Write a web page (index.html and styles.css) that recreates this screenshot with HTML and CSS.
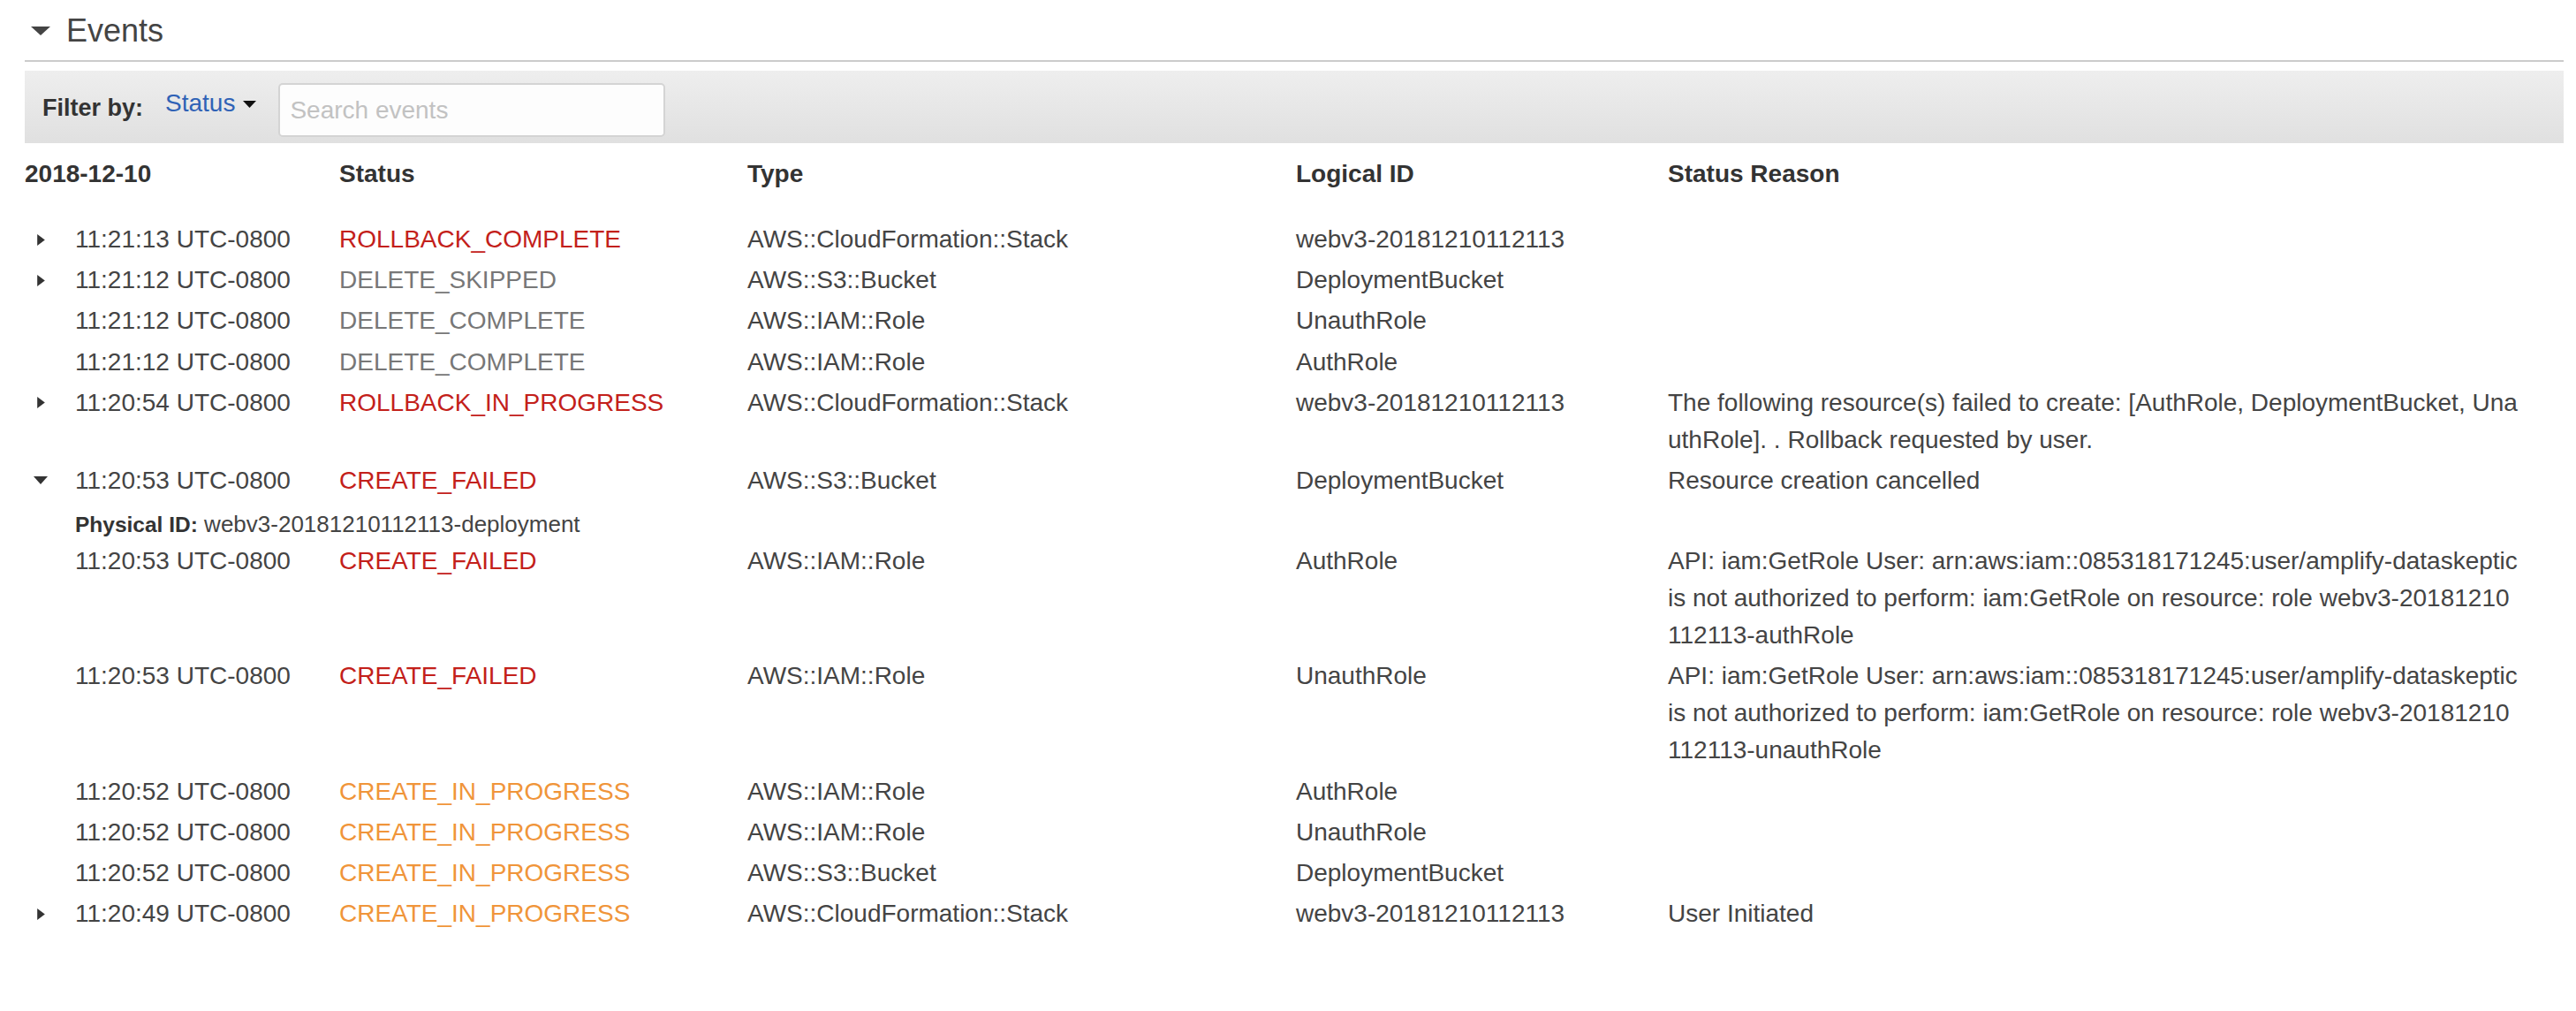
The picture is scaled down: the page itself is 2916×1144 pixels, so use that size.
FILE: index.html
```html
<!DOCTYPE html>
<html lang="en">
<head>
<meta charset="utf-8">
<title>Events</title>
<link rel="stylesheet" href="styles.css">
</head>
<body>
<div class="page">
  <div class="section-head">
    <svg class="section-caret" viewBox="0 0 22 10"><polygon points="0,0 22,0 11,10" fill="#444"/></svg>
    <span class="section-title">Events</span>
  </div>
  <div class="divider"></div>
  <div class="filter-bar">
    <span class="filter-label">Filter by:</span>
    <span class="filter-status">Status</span>
    <svg class="filter-caret" viewBox="0 0 15 8"><polygon points="0,0 15,0 7.5,8" fill="#111"/></svg>
    <input class="search" type="text" placeholder="Search events">
  </div>

  <div class="grid head-row">
    <div class="cell">2018-12-10</div>
    <div class="cell">Status</div>
    <div class="cell">Type</div>
    <div class="cell">Logical ID</div>
    <div class="cell">Status Reason</div>
  </div>

  <div class="events">
    <div class="grid row">
      <div class="cell time"><span class="toggle"><svg class="tri-right" viewBox="0 0 8 12"><polygon points="0,0 8,6 0,12" fill="#333"/></svg></span>11:21:13 UTC-0800</div>
      <div class="cell st-red">ROLLBACK_COMPLETE</div>
      <div class="cell">AWS::CloudFormation::Stack</div>
      <div class="cell">webv3-20181210112113</div>
      <div class="cell reason"></div>
    </div>
    <div class="grid row">
      <div class="cell time"><span class="toggle"><svg class="tri-right" viewBox="0 0 8 12"><polygon points="0,0 8,6 0,12" fill="#333"/></svg></span>11:21:12 UTC-0800</div>
      <div class="cell st-gray">DELETE_SKIPPED</div>
      <div class="cell">AWS::S3::Bucket</div>
      <div class="cell">DeploymentBucket</div>
      <div class="cell reason"></div>
    </div>
    <div class="grid row">
      <div class="cell time"><span class="toggle"></span>11:21:12 UTC-0800</div>
      <div class="cell st-gray">DELETE_COMPLETE</div>
      <div class="cell">AWS::IAM::Role</div>
      <div class="cell">UnauthRole</div>
      <div class="cell reason"></div>
    </div>
    <div class="grid row">
      <div class="cell time"><span class="toggle"></span>11:21:12 UTC-0800</div>
      <div class="cell st-gray">DELETE_COMPLETE</div>
      <div class="cell">AWS::IAM::Role</div>
      <div class="cell">AuthRole</div>
      <div class="cell reason"></div>
    </div>
    <div class="grid row">
      <div class="cell time"><span class="toggle"><svg class="tri-right" viewBox="0 0 8 12"><polygon points="0,0 8,6 0,12" fill="#333"/></svg></span>11:20:54 UTC-0800</div>
      <div class="cell st-red">ROLLBACK_IN_PROGRESS</div>
      <div class="cell">AWS::CloudFormation::Stack</div>
      <div class="cell">webv3-20181210112113</div>
      <div class="cell reason">The following resource(s) failed to create: [AuthRole, DeploymentBucket, UnauthRole]. . Rollback requested by user.</div>
    </div>
    <div class="grid row">
      <div class="cell time"><span class="toggle"><svg class="tri-down" viewBox="0 0 16 9"><polygon points="0,0 16,0 8,9" fill="#333"/></svg></span>11:20:53 UTC-0800</div>
      <div class="cell st-red">CREATE_FAILED</div>
      <div class="cell">AWS::S3::Bucket</div>
      <div class="cell">DeploymentBucket</div>
      <div class="cell reason">Resource creation cancelled</div>
    </div>
    <div class="detail-row"><span class="detail-label">Physical ID:</span> webv3-20181210112113-deployment</div>
    <div class="grid row">
      <div class="cell time"><span class="toggle"></span>11:20:53 UTC-0800</div>
      <div class="cell st-red">CREATE_FAILED</div>
      <div class="cell">AWS::IAM::Role</div>
      <div class="cell">AuthRole</div>
      <div class="cell reason">API: iam:GetRole User: arn:aws:iam::085318171245:user/amplify-dataskeptic is not authorized to perform: iam:GetRole on resource: role webv3-20181210112113-authRole</div>
    </div>
    <div class="grid row">
      <div class="cell time"><span class="toggle"></span>11:20:53 UTC-0800</div>
      <div class="cell st-red">CREATE_FAILED</div>
      <div class="cell">AWS::IAM::Role</div>
      <div class="cell">UnauthRole</div>
      <div class="cell reason">API: iam:GetRole User: arn:aws:iam::085318171245:user/amplify-dataskeptic is not authorized to perform: iam:GetRole on resource: role webv3-20181210112113-unauthRole</div>
    </div>
    <div class="grid row">
      <div class="cell time"><span class="toggle"></span>11:20:52 UTC-0800</div>
      <div class="cell st-orange">CREATE_IN_PROGRESS</div>
      <div class="cell">AWS::IAM::Role</div>
      <div class="cell">AuthRole</div>
      <div class="cell reason"></div>
    </div>
    <div class="grid row">
      <div class="cell time"><span class="toggle"></span>11:20:52 UTC-0800</div>
      <div class="cell st-orange">CREATE_IN_PROGRESS</div>
      <div class="cell">AWS::IAM::Role</div>
      <div class="cell">UnauthRole</div>
      <div class="cell reason"></div>
    </div>
    <div class="grid row">
      <div class="cell time"><span class="toggle"></span>11:20:52 UTC-0800</div>
      <div class="cell st-orange">CREATE_IN_PROGRESS</div>
      <div class="cell">AWS::S3::Bucket</div>
      <div class="cell">DeploymentBucket</div>
      <div class="cell reason"></div>
    </div>
    <div class="grid row">
      <div class="cell time"><span class="toggle"><svg class="tri-right" viewBox="0 0 8 12"><polygon points="0,0 8,6 0,12" fill="#333"/></svg></span>11:20:49 UTC-0800</div>
      <div class="cell st-orange">CREATE_IN_PROGRESS</div>
      <div class="cell">AWS::CloudFormation::Stack</div>
      <div class="cell">webv3-20181210112113</div>
      <div class="cell reason">User Initiated</div>
    </div>
  </div>
</div>
</body>
</html>
```

FILE: styles.css
```css
* { box-sizing: border-box; }

body {
  margin: 0;
  background: #ffffff;
  color: #444444;
  font-family: "Liberation Sans", Arial, Helvetica, sans-serif;
}

.page {
  padding: 11px 14px 0 28px;
}

.section-head {
  display: flex;
  align-items: center;
  height: 48px;
}

.section-caret {
  width: 22px;
  height: 10px;
  margin-left: 7px;
  margin-right: 18px;
}

.section-title {
  font-size: 36px;
  line-height: 48px;
  color: #444444;
}

.divider {
  height: 2px;
  background: #cccccc;
  margin-top: 9px;
}

.filter-bar {
  margin-top: 10px;
  height: 82px;
  background: linear-gradient(#eeeeee, #e0e0e0);
  display: flex;
  align-items: flex-start;
  padding-left: 20px;
}

.filter-label {
  font-size: 27px;
  font-weight: bold;
  line-height: 30px;
  margin-top: 27px;
  color: #333333;
}

.filter-status {
  font-size: 28px;
  line-height: 32px;
  margin-top: 21px;
  margin-left: 25px;
  color: #2f62b6;
}

.filter-caret {
  width: 15px;
  height: 8px;
  margin-top: 34px;
  margin-left: 9px;
}

.search {
  margin-top: 14px;
  margin-left: 25px;
  width: 438px;
  height: 61px;
  border: 2px solid #d4d4d4;
  border-radius: 5px;
  background: #fdfdfd;
  padding: 0 0 0 11px;
  font-family: "Liberation Sans", Arial, Helvetica, sans-serif;
  font-size: 28px;
  color: #444444;
  outline: none;
}

.search::placeholder {
  color: #c2c2c2;
}

.grid {
  display: grid;
  grid-template-columns: 356px 462px 621px 421px 964px;
}

.cell {
  font-size: 28px;
  line-height: 42px;
  padding-top: 2px;
  padding-bottom: 2px;
}

.head-row {
  margin-top: 12px;
}

.head-row .cell {
  font-weight: bold;
  color: #333333;
}

.events {
  margin-top: 28px;
}

.row .cell {
  padding-bottom: 2.2px;
}

.time {
  display: flex;
  align-items: flex-start;
  padding-left: 10px;
}

.toggle {
  width: 16px;
  height: 42px;
  margin-right: 31px;
  display: flex;
  align-items: center;
  justify-content: center;
  flex: none;
}

.tri-right {
  width: 9px;
  height: 13px;
}

.tri-down {
  width: 16px;
  height: 9px;
}

.reason {
  word-break: break-all;
}

.st-red { color: #c3201a; }
.st-gray { color: #777777; }
.st-orange { color: #f0953a; }

.detail-row {
  font-size: 26px;
  line-height: 36px;
  padding: 8px 0 0 57px;
}

.detail-label {
  font-size: 24.5px;
  font-weight: bold;
  color: #333333;
}
```
